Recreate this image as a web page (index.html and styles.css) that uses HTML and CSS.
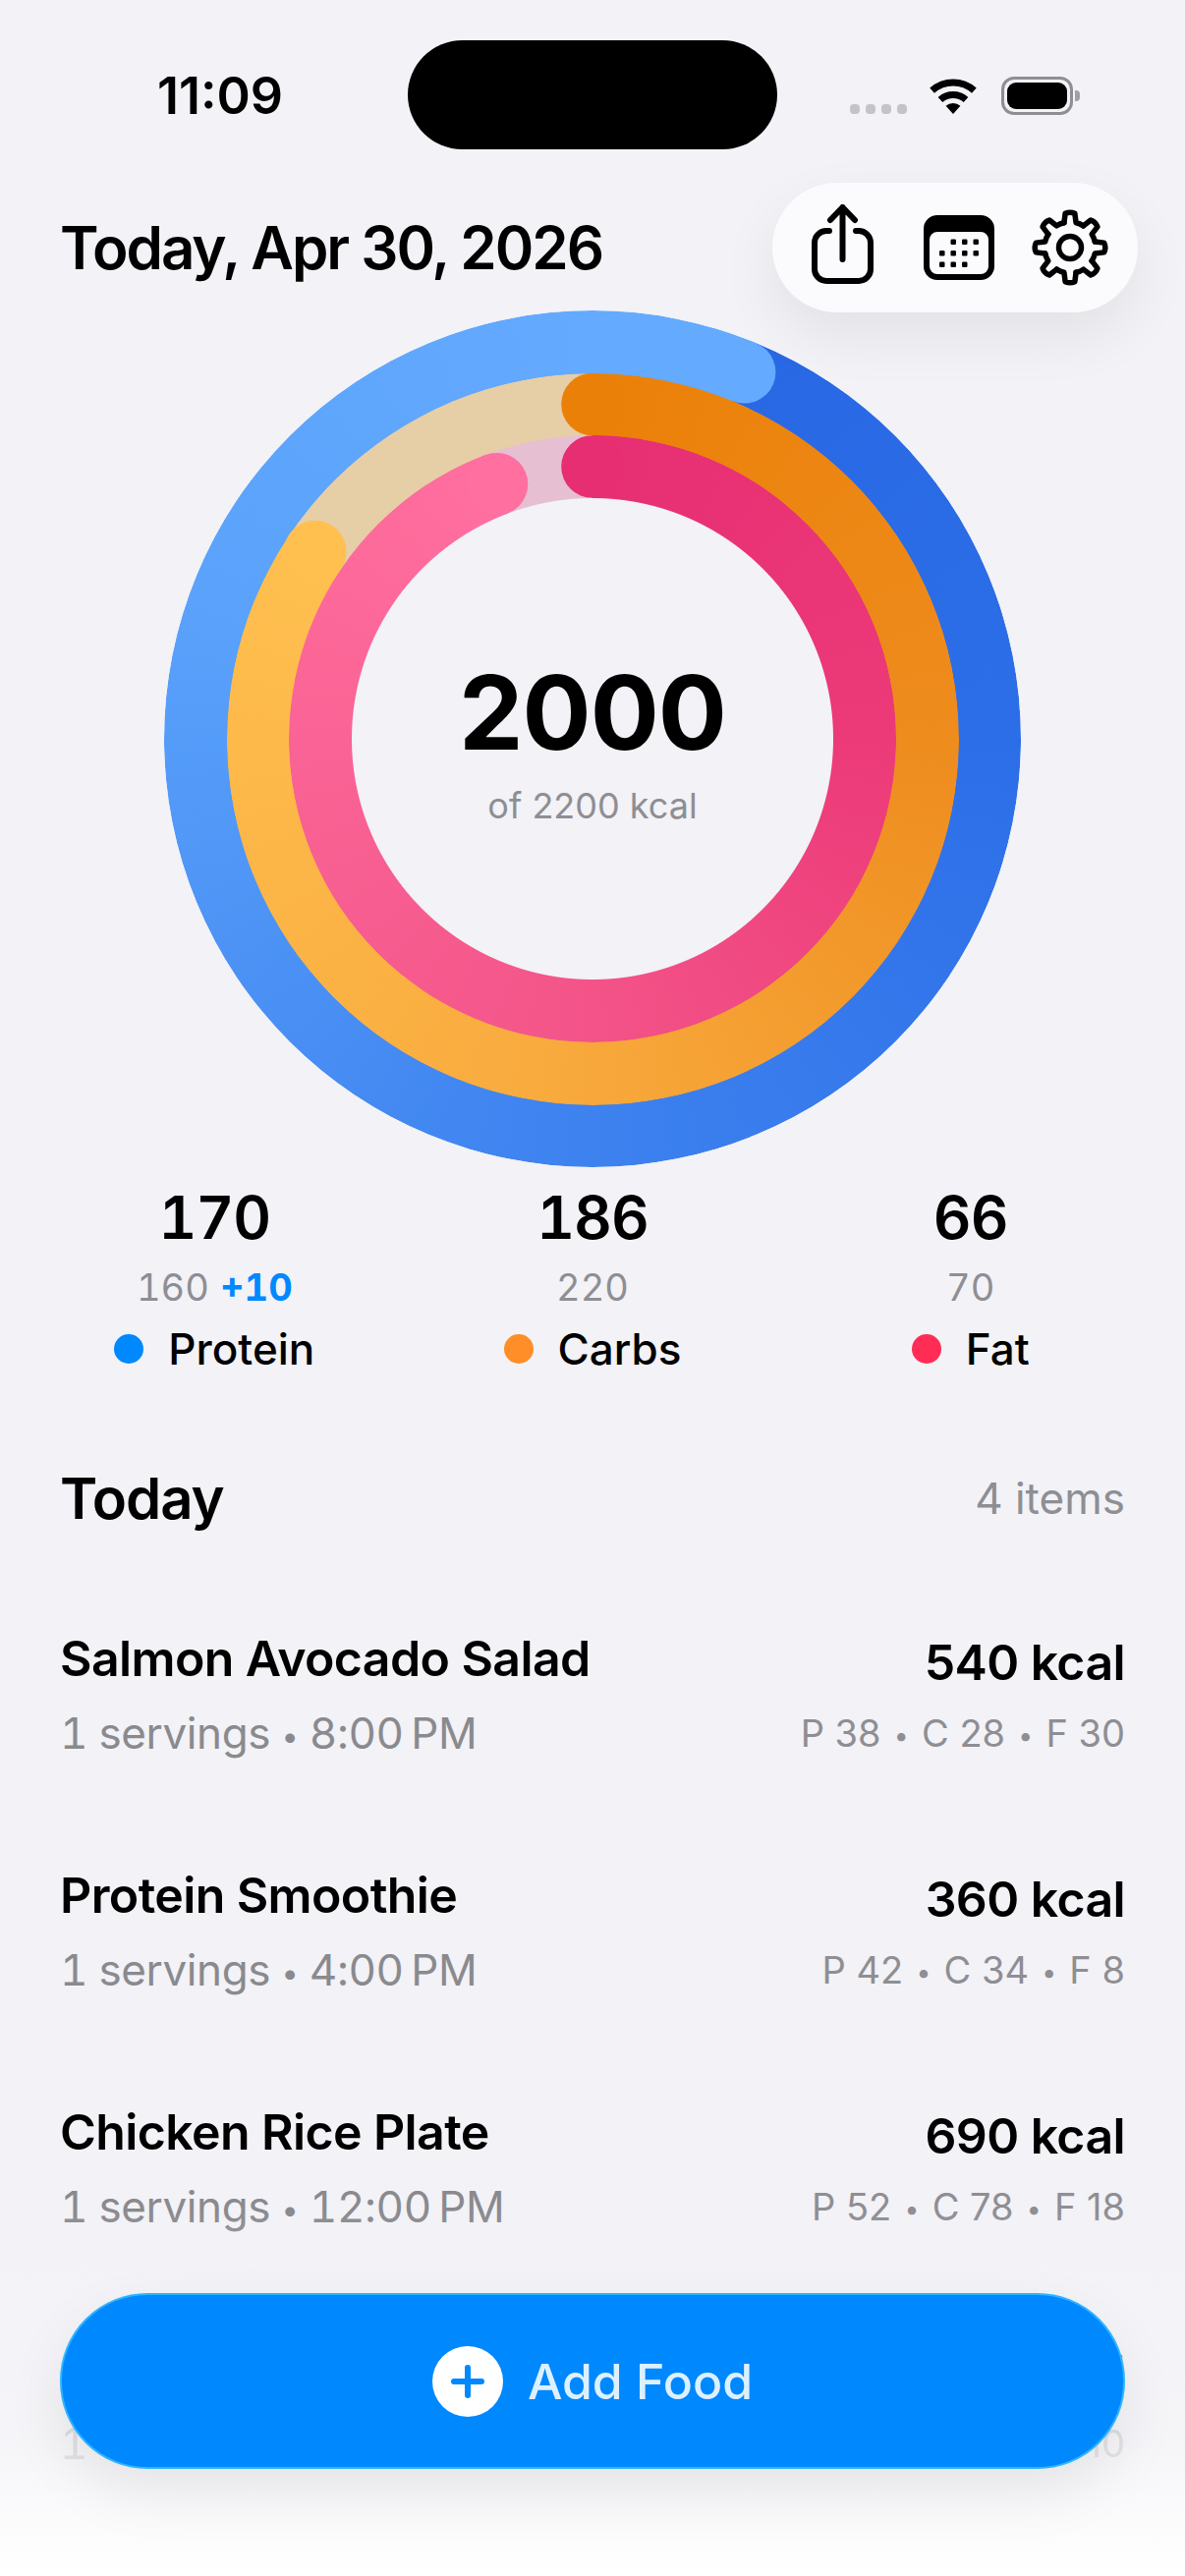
FILE: index.html
```html
<!DOCTYPE html>
<html lang="en">
<head>
<meta charset="utf-8">
<title>Today</title>
<link rel="stylesheet" href="styles.css">
</head>
<body>
<main class="screen">
  <header class="status">
    <div class="time">11:09</div>
    <div class="island"></div>
    <div class="status-icons">
      <div class="signal"><i></i><i></i><i></i><i></i></div>
      <svg class="wifi" viewBox="0 0 50 38" width="50" height="38">
        <path class="wifi-arc" d="M3.6 13.2A32 32 0 0 1 46.4 13.2"/>
        <path class="wifi-arc" d="M12 22.5A19.5 19.5 0 0 1 38 22.5"/>
        <path d="M25 37L17.6 28.8A11 11 0 0 1 32.4 28.8Z"/>
      </svg>
      <div class="battery"><div class="battery-fill"></div><div class="battery-nub"></div></div>
    </div>
  </header>

  <section class="top-row">
    <h1 class="date">Today, Apr 30, 2026</h1>
    <div class="toolbar">
      <svg class="icon-share" viewBox="0 0 64 82" width="64" height="82">
        <path d="M18 27H15A12 12 0 0 0 3 39V66A12 12 0 0 0 15 78H48A12 12 0 0 0 60 66V39A12 12 0 0 0 48 27H45"/>
        <path d="M31.5 3V56M19 16L31.5 3L44 16"/>
      </svg>
      <svg class="icon-calendar" viewBox="0 0 72 66" width="72" height="66">
        <path fill-rule="evenodd" d="M14 0H58A14 14 0 0 1 72 14V52A14 14 0 0 1 58 66H14A14 14 0 0 1 0 52V14A14 14 0 0 1 14 0ZM14 17A8 8 0 0 0 6 25V52A8 8 0 0 0 14 60H58A8 8 0 0 0 66 52V25A8 8 0 0 0 58 17Z"/>
        <g>
          <rect x="27.5" y="24.5" width="5.500" height="5.500" rx="1.200"/><rect x="39" y="24.500" width="5.500" height="5.500" rx="1.200"/><rect x="50.500" y="24.500" width="5.500" height="5.500" rx="1.200"/>
          <rect x="16" y="36" width="5.500" height="5.500" rx="1.200"/><rect x="27.500" y="36" width="5.500" height="5.500" rx="1.200"/><rect x="39" y="36" width="5.500" height="5.500" rx="1.200"/><rect x="50.500" y="36" width="5.500" height="5.500" rx="1.200"/>
          <rect x="16" y="47.500" width="5.500" height="5.500" rx="1.200"/><rect x="27.500" y="47.500" width="5.500" height="5.500" rx="1.200"/><rect x="39" y="47.500" width="5.500" height="5.500" rx="1.200"/>
        </g>
      </svg>
      <svg class="icon-gear" viewBox="-40 -40 80 80" width="80" height="80">
        <defs><path id="gear-tooth" d="M-6.07 -25.3L-4.87 -34.66Q0 -37 4.87 -34.66L6.07 -25.3Q10 -24.5 13.58 -22.17"/></defs>
        <use href="#gear-tooth"/>
        <use href="#gear-tooth" transform="rotate(45)"/>
        <use href="#gear-tooth" transform="rotate(90)"/>
        <use href="#gear-tooth" transform="rotate(135)"/>
        <use href="#gear-tooth" transform="rotate(180)"/>
        <use href="#gear-tooth" transform="rotate(225)"/>
        <use href="#gear-tooth" transform="rotate(270)"/>
        <use href="#gear-tooth" transform="rotate(315)"/>
        <circle r="11.500"/>
      </svg>
    </div>
  </section>

  <section class="rings">
    <div class="ring ring-blue"></div>
    <div class="ring ring-orange"></div>
    <div class="ring ring-pink"></div>
    <svg class="caps" viewBox="0 0 872 872" width="872" height="872">
      <circle class="cap-blue" cx="590.6" cy="62.8" r="31.8"/>
      <circle class="cap-orange-start" cx="436" cy="95.5" r="31.8"/>
      <circle class="cap-orange-end" cx="153.7" cy="245.6" r="31.8"/>
      <circle class="cap-pink-start" cx="436" cy="159" r="31.8"/>
      <circle class="cap-pink-end" cx="338.5" cy="176.7" r="31.8"/>
    </svg>
    <div class="ring-center">
      <div class="kcal-big">2000</div>
      <div class="kcal-of">of 2200 kcal</div>
    </div>
  </section>

  <section class="macros">
    <div class="macro">
      <div class="macro-num">170</div>
      <div class="macro-goal">160 <b class="over">+10</b></div>
      <div class="macro-label"><i class="dot dot-protein"></i>Protein</div>
    </div>
    <div class="macro">
      <div class="macro-num">186</div>
      <div class="macro-goal">220</div>
      <div class="macro-label"><i class="dot dot-carbs"></i>Carbs</div>
    </div>
    <div class="macro">
      <div class="macro-num">66</div>
      <div class="macro-goal">70</div>
      <div class="macro-label"><i class="dot dot-fat"></i>Fat</div>
    </div>
  </section>

  <section class="list-head">
    <h2 class="list-title">Today</h2>
    <span class="list-count">4 items</span>
  </section>

  <section class="foods">
    <article class="food">
      <div class="food-left"><div class="food-name">Salmon Avocado Salad</div><div class="food-meta">1 servings <span class="sep">•</span> 8:00&#8201;PM</div></div>
      <div class="food-right"><div class="food-kcal">540 kcal</div><div class="food-macros">P 38 <span class="sep">•</span> C 28 <span class="sep">•</span> F 30</div></div>
    </article>
    <article class="food">
      <div class="food-left"><div class="food-name">Protein Smoothie</div><div class="food-meta">1 servings <span class="sep">•</span> 4:00&#8201;PM</div></div>
      <div class="food-right"><div class="food-kcal">360 kcal</div><div class="food-macros">P 42 <span class="sep">•</span> C 34 <span class="sep">•</span> F 8</div></div>
    </article>
    <article class="food">
      <div class="food-left"><div class="food-name">Chicken Rice Plate</div><div class="food-meta">1 servings <span class="sep">•</span> 12:00&#8201;PM</div></div>
      <div class="food-right"><div class="food-kcal">690 kcal</div><div class="food-macros">P 52 <span class="sep">•</span> C 78 <span class="sep">•</span> F 18</div></div>
    </article>
    <article class="food">
      <div class="food-left"><div class="food-name">Oatmeal Bowl</div><div class="food-meta">1 servings <span class="sep">•</span> 8:00&#8201;AM</div></div>
      <div class="food-right"><div class="food-kcal">410 kcal</div><div class="food-macros">P 38 <span class="sep">•</span> C 46 <span class="sep">•</span> F 10</div></div>
    </article>
  </section>

  <footer class="dock">
    <button class="add-btn">
      <svg class="plus" viewBox="0 0 72 72" width="72" height="72">
        <circle cx="36" cy="36" r="36"/>
        <path d="M36 22V50M22 36H50"/>
      </svg>
      <span>Add Food</span>
    </button>
  </footer>
</main>
</body>
</html>
```
FILE: styles.css
```css
* { box-sizing: border-box; }
html, body { margin: 0; padding: 0; }
body { background: #f2f2f7; font-family: Inter, "Liberation Sans", sans-serif; color: #000; }
h1, h2 { margin: 0; font-weight: 600; }

.screen { position: relative; width: 1206px; height: 2622px; overflow: hidden; background: #f2f2f7; }

/* status bar */
.status { display: grid; grid-template-columns: 415px 376px 1fr; height: 186px; padding-top: 41px; align-items: start; }
.time { padding-left: 160px; font-size: 52px; font-weight: 600; line-height: 56px; margin-top: 29px; }
.island { height: 111px; background: #000; border-radius: 56px; }
.status-icons { display: flex; align-items: flex-end; margin: 37px 0 0 74px; height: 39px; }
.signal { display: flex; gap: 6px; margin-bottom: 1px; }
.signal i { width: 10px; height: 10px; border-radius: 4px; background: #c4c4c8; }
.wifi { margin-left: 22px; display: block; fill: #000; }
.wifi-arc { fill: none; stroke: #000; stroke-width: 7; }
.battery { position: relative; width: 73px; height: 39px; margin-left: 24px; border: 3px solid #8e8e93; border-radius: 13px; padding: 3px; }
.battery-fill { width: 100%; height: 100%; background: #000; border-radius: 9px; }
.battery-nub { position: absolute; left: 72px; top: 11px; width: 5px; height: 11px; border-radius: 0 4px 4px 0; background: #a0a0a5; }

/* header row */
.top-row { position: relative; z-index: 2; display: flex; align-items: center; justify-content: space-between; height: 132px; padding: 0 48px 0 61px; }
.date { font-size: 60px; line-height: 72px; letter-spacing: -2px; }
.toolbar { display: flex; align-items: center; width: 372px; height: 132px; padding: 0 30px 0 40px; background: #fbfbfd; border-radius: 66px; box-shadow: 0 24px 60px rgba(0,0,0,.07); }
.toolbar svg { display: block; flex: none; }
.icon-share { margin-top: -6px; fill: none; stroke: #000; stroke-width: 6; stroke-linecap: round; stroke-linejoin: round; }
.icon-calendar { margin-left: 50px; fill: #000; }
.icon-gear { margin-left: 37px; fill: none; stroke: #000; stroke-width: 5.500; stroke-linecap: round; stroke-linejoin: round; }

/* rings */
.rings { display: grid; place-items: center; width: 872px; height: 872px; margin: -2px auto 0; }
.rings > * { grid-area: 1 / 1; }
.ring { border-radius: 50%; }
.ring-blue {
  width: 872px; height: 872px;
  background: conic-gradient(#64aaff 0deg 22.5deg, #2968e4 22.5deg, #2c6ee8 90deg, #3f84f0 190deg, #5aa2fb 290deg, #64aaff 360deg);
  -webkit-mask: radial-gradient(closest-side, transparent 368px, #000 369px);
  mask: radial-gradient(closest-side, transparent 368px, #000 369px);
}
.ring-orange {
  width: 745px; height: 745px;
  background: conic-gradient(#eb8008 0deg, #ee8c1e 90deg, #f9ab3e 190deg, #ffc050 304deg, #e6cea6 304deg 360deg);
  -webkit-mask: radial-gradient(closest-side, transparent 305px, #000 306px);
  mask: radial-gradient(closest-side, transparent 305px, #000 306px);
}
.ring-pink {
  width: 618px; height: 618px;
  background: conic-gradient(#e72e73 0deg, #ec3a78 90deg, #f4568a 190deg, #ff6f9f 339.4deg, #e6bfd2 339.4deg 360deg);
  -webkit-mask: radial-gradient(closest-side, transparent 244.5px, #000 245.5px);
  mask: radial-gradient(closest-side, transparent 244.5px, #000 245.5px);
}
.caps { display: block; position: relative; }
.cap-blue { fill: #64aaff; }
.cap-orange-start { fill: #eb8008; }
.cap-orange-end { fill: #ffc050; }
.cap-pink-start { fill: #e72e73; }
.cap-pink-end { fill: #ff6f9f; }
.ring-center { position: relative; text-align: center; margin-top: 7px; }
.kcal-big { font-size: 104px; font-weight: 700; line-height: 112px; letter-spacing: -1px; }
.kcal-of { font-size: 36px; line-height: 44px; color: #8e8e93; margin-top: 17px; }

/* macros */
.macros { display: grid; grid-template-columns: repeat(3, 1fr); padding: 15px 26px 0; text-align: center; font-variant-numeric: tabular-nums; }
.macro-num { font-size: 60px; font-weight: 600; line-height: 72px; letter-spacing: -1px; }
.macro-goal { font-size: 38px; line-height: 46px; margin-top: 12px; color: #8e8e93; }
.over { color: #0088ff; font-weight: 700; margin-left: 1px; }
.macro-label { display: flex; align-items: center; justify-content: center; gap: 25px; font-size: 44px; font-weight: 500; line-height: 52px; margin-top: 14px; }
.dot { width: 30px; height: 30px; border-radius: 50%; }
.dot-protein { background: #0088ff; }
.dot-carbs { background: #ff8d28; }
.dot-fat { background: #ff2d55; }

/* list */
.list-head { display: flex; align-items: center; justify-content: space-between; margin-top: 90px; padding: 0 61px; }
.list-title { font-size: 58px; line-height: 72px; letter-spacing: -1px; }
.list-count { font-size: 44px; color: #8e8e93; }
.foods { display: flex; flex-direction: column; gap: 108px; margin-top: 97px; padding: 0 61px; }
.food { display: flex; justify-content: space-between; height: 133px; }
.food-name { font-size: 50px; font-weight: 600; line-height: 60px; letter-spacing: -.6px; }
.food-meta { font-size: 44px; line-height: 56px; margin-top: 18px; color: #8a8a8e; font-variant-numeric: tabular-nums; letter-spacing: -.4px; }
.food-right { text-align: right; padding-top: 4px; }
.food-kcal { font-size: 50px; font-weight: 600; line-height: 60px; letter-spacing: -.6px; }
.food-macros { font-size: 38px; line-height: 48px; margin-top: 18px; color: #8e8e93; }
.sep { font-size: .7em; vertical-align: .08em; }
.food-macros .sep { margin: 0 2.5px; }

/* floating dock */
.dock { position: absolute; left: 0; right: 0; bottom: 0; height: 372px; padding: 84px 61px 0; z-index: 3;
  background: linear-gradient(to bottom, rgba(245,245,249,0) 0, rgba(245,245,249,.55) 130px, rgba(246,246,249,.78) 230px, #fff 370px); }
.add-btn { display: flex; align-items: center; justify-content: center; gap: 25px; width: 100%; height: 179px; border: 2px solid #2fb4ff; border-radius: 89px; background: #0088ff; color: #dcf1ff; font: 500 50px/60px Inter, "Liberation Sans", sans-serif; box-shadow: 0 24px 60px rgba(0,0,0,.08); }
.plus { display: block; fill: #fff; }
.plus path { fill: none; stroke: #0088ff; stroke-width: 6; stroke-linecap: round; }
```
